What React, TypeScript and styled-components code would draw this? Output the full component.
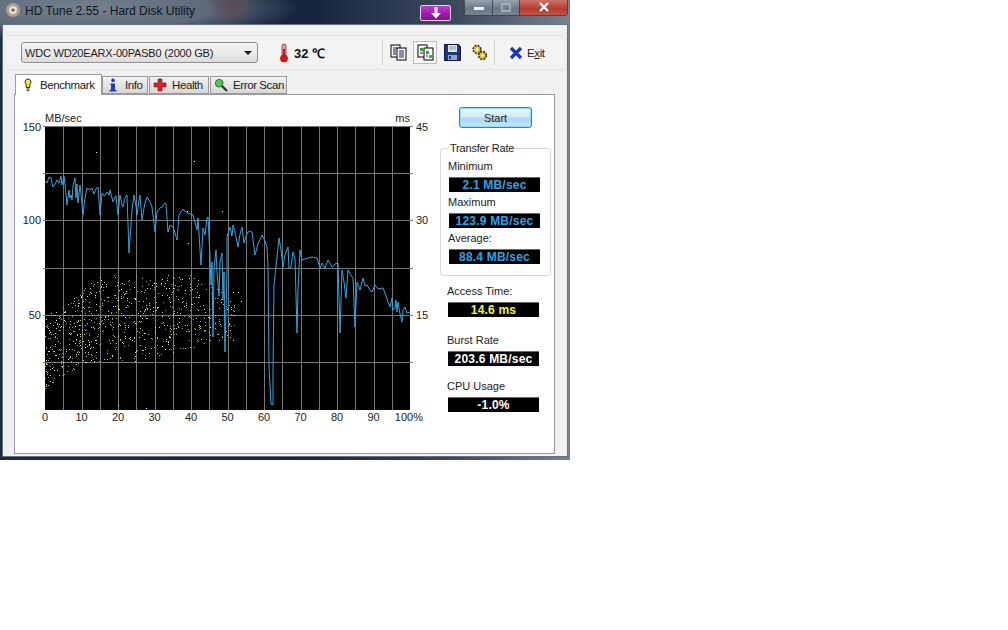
import React from 'react';
import styled, { createGlobalStyle } from 'styled-components';

const GlobalStyle = createGlobalStyle`
  html, body {
    margin: 0;
    background: #fff;
    font-family: "Liberation Sans", Arial, sans-serif;
    color: #222;
  }
`;

const Window = styled.div`
  width: 570px;
  height: 460px;
  box-sizing: border-box;
  display: flex;
  flex-direction: column;
  padding: 0 2px 3px 2px;
  background:
    radial-gradient(ellipse 26px 24px at 232px 4px, #5d4a55 0%, rgba(93, 74, 85, 0) 100%),
    radial-gradient(ellipse 215px 34px at 85px 8px, #77818e 0%, #5d6a7b 60%, rgba(60, 72, 92, 0) 100%),
    linear-gradient(90deg, #1c2b44 0%, #172540 55%, #3d4a5e 80%, #77828f 100%);
`;

const TitleBar = styled.div`
  height: 24px;
  flex: none;
  display: flex;
  align-items: flex-start;
`;

const AppIcon = styled.svg`
  width: 16px;
  height: 16px;
  margin: 2px 0 0 3px;
`;

const Title = styled.div`
  margin: 3px 0 0 4px;
  font-size: 12px;
  line-height: 16px;
  color: #0c1420;
`;

const TitleSpacer = styled.div`
  flex: 1;
`;

const DropButton = styled.div`
  width: 31px;
  height: 16px;
  margin: 5px 12px 0 0;
  box-sizing: border-box;
  border: 1px solid #e6d0ec;
  border-radius: 2px;
  background: linear-gradient(180deg, #c43ad0 0%, #a01cae 55%, #7c1490 100%);
  display: flex;
  justify-content: center;
`;

const CaptionButtons = styled.div`
  display: flex;
  height: 15px;
  border: 1px solid #3b4656;
  border-top: none;
  border-radius: 0 0 4px 4px;
  overflow: hidden;
`;

const CaptionButton = styled.div<{ $w: number; $close?: boolean }>`
  width: ${p => p.$w}px;
  display: flex;
  align-items: center;
  justify-content: center;
  border-left: 1px solid rgba(30, 40, 55, 0.6);
  background: ${p =>
    p.$close
      ? 'linear-gradient(180deg, #c9746a 0%, #b5392f 60%, #c2574a 100%)'
      : 'linear-gradient(180deg, #9aa4b0 0%, #6b7888 55%, #76838f 100%)'};
`;

const Client = styled.div`
  flex: 1;
  min-height: 0;
  display: flex;
  flex-direction: column;
  box-sizing: border-box;
  background: #f0f0f0;
  border: 1px solid #66707e;
  padding: 10px 12px 2px 4px;
`;

const Toolbar = styled.div`
  height: 35px;
  flex: none;
  box-sizing: border-box;
  display: flex;
  align-items: center;
  margin-right: -8px;
  padding-left: 14px;
  background: #f3f3f3;
  border-top: 1px solid #e3e3e3;
  border-bottom: 1px solid #e3e3e3;
`;

const Combo = styled.div`
  width: 237px;
  height: 21px;
  box-sizing: border-box;
  display: flex;
  align-items: center;
  justify-content: space-between;
  padding: 0 4px 0 3px;
  border: 1px solid #8e8e8e;
  border-radius: 3px;
  background: linear-gradient(180deg, #f2f2f2 0%, #ebebeb 50%, #dcdcdc 100%);
  font-size: 11px;
  letter-spacing: -0.2px;
  white-space: nowrap;
  color: #1c1c1c;
`;

const ComboArrow = styled.span`
  width: 0;
  height: 0;
  border-left: 4px solid transparent;
  border-right: 4px solid transparent;
  border-top: 4px solid #111;
  margin-right: 1px;
`;

const Temperature = styled.div`
  display: flex;
  align-items: center;
  margin-left: 20px;
  width: 104px;
  font-size: 13px;
  font-weight: bold;
  color: #111;
`;

const TempIcon = styled.svg`
  width: 12px;
  height: 20px;
  margin-right: 4px;
`;

const Separator = styled.div<{ $gap?: number }>`
  width: 1px;
  height: 25px;
  margin-left: ${p => p.$gap ?? 0}px;
  background: #cfcfcf;
`;

const ToolButton = styled.div<{ $pressed?: boolean }>`
  width: 24px;
  height: 23px;
  margin-left: 3px;
  box-sizing: border-box;
  display: flex;
  align-items: center;
  justify-content: center;
  border: 1px solid ${p => (p.$pressed ? '#bdbdbd' : 'transparent')};
  background: ${p => (p.$pressed ? '#f8f8f8' : 'transparent')};
  svg {
    width: 17px;
    height: 17px;
  }
`;

const ExitButton = styled.div`
  display: flex;
  align-items: center;
  margin-left: 14px;
  font-size: 11.5px;
  letter-spacing: -0.4px;
  color: #222;
  svg {
    width: 14px;
    height: 14px;
    margin-right: 4px;
  }
  u {
    text-underline-offset: 1px;
  }
`;

const TabRow = styled.div`
  height: 20px;
  margin-top: 4px;
  flex: none;
  display: flex;
  align-items: flex-end;
  padding-left: 8px;
  position: relative;
  z-index: 1;
`;

const TabItem = styled.div<{ $w: number; $active?: boolean }>`
  width: ${p => p.$w}px;
  height: ${p => (p.$active ? 21 : 18)}px;
  margin-right: ${p => (p.$active ? 0 : 1)}px;
  margin-bottom: ${p => (p.$active ? -1 : 0)}px;
  box-sizing: border-box;
  display: flex;
  align-items: center;
  padding-left: ${p => (p.$active ? 5 : 3)}px;
  gap: 5px;
  border: 1px solid #9a9a9a;
  border-bottom: ${p => (p.$active ? 'none' : '1px solid #9a9a9a')};
  background: ${p => (p.$active ? '#fff' : 'linear-gradient(180deg, #f2f2f2 0%, #e4e4e4 50%, #d6d6d6 100%)')};
  font-size: 11.5px;
  letter-spacing: -0.4px;
  white-space: nowrap;
  color: #222;
  svg {
    width: 14px;
    height: 14px;
    flex: none;
  }
`;

const Panel = styled.div`
  flex: 1;
  min-height: 0;
  margin-left: 7px;
  box-sizing: border-box;
  display: flex;
  background: #fff;
  border: 1px solid #9a9a9a;
`;

const ChartSvg = styled.svg`
  width: 415px;
  height: 330px;
  margin-top: 15px;
  flex: none;
  font-family: "Liberation Sans", Arial, sans-serif;
`;

const Side = styled.div`
  margin-left: 10px;
  width: 111px;
  display: flex;
  flex-direction: column;
  padding-top: 12px;
`;

const StartButton = styled.div`
  width: 73px;
  height: 21px;
  margin-left: 19px;
  box-sizing: border-box;
  display: flex;
  align-items: center;
  justify-content: center;
  border: 1px solid #3c7fb1;
  border-radius: 3px;
  box-shadow: inset 0 0 0 1px #8fdcf8;
  background: linear-gradient(180deg, #eaf6fc 0%, #d4ecf8 48%, #a9d9f1 52%, #c4e6f6 100%);
  font-size: 11px;
  color: #222;
`;

const Group = styled.fieldset`
  margin: 14px 0 0;
  padding: 4px 8px 0 8px;
  height: 134px;
  box-sizing: border-box;
  border: 1px solid #d9d9d9;
  border-radius: 3px;
  min-width: 0;
  legend {
    padding: 0 2px;
    margin-left: -1px;
    font-size: 11px;
    line-height: 13px;
    letter-spacing: -0.2px;
    color: #222;
  }
`;

const Metric = styled.div<{ $top?: number }>`
  margin-top: ${p => p.$top ?? 0}px;
  width: 100%;
`;

const MetricLabel = styled.div`
  margin-left: -1px;
  font-size: 11px;
  line-height: 14px;
  height: 15px;
  color: #222;
`;

const Readout = styled.div<{ $color: string }>`
  width: 91px;
  height: 15px;
  margin-top: 3px;
  margin-bottom: 3px;
  box-sizing: border-box;
  display: flex;
  align-items: center;
  justify-content: center;
  background: #000;
  border-top: 1px solid #6a6a6a;
  font-size: 12px;
  line-height: 13px;
  font-weight: bold;
  letter-spacing: 0.2px;
  white-space: nowrap;
  color: ${p => p.$color};
`;

const Stand = styled.div`
  padding-left: 8px;
`;

// chart svg sits at page x=15,y=110, traced points below are page coords
const OX = 15;
const OY = 110;
const L = 45;
const R = 410;
const T = 126;
const B = 410;

const trace = `45,181 47,183 49,177 51,178 53,187 55,184 57,180 59,183 61,176 62,185 64,176 65,184
67,205 69,190 70,198 71,195 72,200 73,186 75,178 76,198 77,184 78,203 80,185 81,194 83,215 85,198 87,188
90,190 92,188 94,194 96,189 98,187 100,215 102,193 104,196 107,192 109,195 110,190 113,202 115,197 116,196
118,215 120,195 122,205 123,207 125,198 127,195 129,253 131,225 132,210 134,195 136,206 137,215 139,200
140,195 142,220 144,208 145,203 147,197 150,202 152,207 155,232 157,212 160,208 162,207 165,203 166,204
168,232 170,225 173,227 175,233 177,240 179,215 181,212 183,209 186,212 188,213 193,215 197,230 198,218
201,265 203,228 205,235 207,218 208,217 210,257 211,285 212,262 213,337 214,268 216,250 217,272 219,296
220,262 222,253 223,300 224,272 225,352 227,272 227,237 229,230 230,227 232,236 233,225 235,232 238,247
240,234 242,227 244,243 246,236 248,232 250,231 252,232 255,255 258,244 262,235 265,241 267,247 268,265
269,367 271,404 273,405 273,375 274,285 276,266 277,257 279,238 281,250 283,267 285,255 288,247 289,268
291,267 293,252 295,258 297,333 298,290 300,250 302,260 305,259 308,258 312,257 317,258 320,268 322,263
325,268 328,260 332,267 335,264 338,263 340,333 342,270 344,282 346,298 348,270 350,274 353,278 355,327
357,282 360,290 363,278 365,286 367,285 370,290 372,292 375,285 378,289 383,288 386,296 388,302 390,307
392,298 393,310 395,308 396,300 397,312 398,302 400,314 402,322 403,310 405,307 407,313 410,312`
  .replace(/\s+/g, ' ')
  .trim();

const linePoints = trace
  .split(' ')
  .map(p => {
    const [x, y] = p.split(',').map(Number);
    return `${x - OX},${y - OY}`;
  })
  .join(' ');

// little LCG so the access time scatter comes out the same every render
const rng = (seed: number) => () => {
  seed = (seed * 1664525 + 1013904223) % 4294967296;
  return seed / 4294967296;
};

const topEdge = (x: number) => {
  if (x < 100) return 318 - (x - 45) * 0.78;
  if (x < 195) return 275;
  return 275 + (x - 195) * 0.6;
};
const bottomEdge = (x: number) => {
  if (x < 85) return 388 - (x - 45) * 0.65;
  if (x < 130) return 362;
  return 362 - (x - 130) * 0.22;
};

const scatter = (() => {
  const r = rng(42);
  const dots: { x: number; y: number; o: number }[] = [];
  while (dots.length < 760) {
    const x = 45 + Math.pow(r(), 1.2) * 190;
    const y = topEdge(x) + r() * (bottomEdge(x) - topEdge(x));
    if (x > 200 && r() < 0.6) continue;
    dots.push({ x: Math.round(x), y: Math.round(y), o: 0.6 + r() * 0.4 });
  }
  return dots;
})();

const strayDots = [
  [96, 152],
  [194, 161],
  [187, 211],
  [188, 243],
  [222, 211],
  [118, 405],
  [146, 408],
  [233, 292],
  [238, 292],
  [241, 301],
  [233, 340],
];

const xLabels = [0, 10, 20, 30, 40, 50, 60, 70, 80, 90];
const hLines = [173, 220, 268, 315, 362].map(y => y + 0.5);
const vLines = Array.from({ length: 19 }, (_, i) => Math.round(L + ((R - L) * (i + 1)) / 20) + 0.5);

const Chart = () => (
  <ChartSvg viewBox="0 0 415 330">
    <rect x={L - OX} y={T - OY} width={R - L} height={B - T} fill="#000" />
    {vLines.map(x => (
      <line key={x} x1={x - OX} x2={x - OX} y1={T - OY} y2={B - OY} stroke="#787878" />
    ))}
    {hLines.map(y => (
      <line key={y} x1={L - OX - 2} x2={R - OX + 3} y1={y - OY} y2={y - OY} stroke="#787878" />
    ))}
    <line x1={L - OX - 2} x2={R - OX + 3} y1={T - OY + 0.5} y2={T - OY + 0.5} stroke="#787878" />
    {scatter.map((d, i) => (
      <rect key={i} x={d.x - OX} y={d.y - OY} width={1} height={1} fill="#ecec9a" opacity={d.o} />
    ))}
    {strayDots.map(([x, y]) => (
      <rect key={`${x}-${y}`} x={x - OX} y={y - OY} width={1} height={1} fill="#f4f4d8" />
    ))}
    <polyline points={linePoints} fill="none" stroke="#35a5dd" strokeWidth={1} strokeLinejoin="round" />
    <g fontSize={11} fill="#222">
      <text x={L - OX} y={122 - OY}>MB/sec</text>
      <text x={R - OX} y={122 - OY} textAnchor="end">ms</text>
      <text x={26} y={21} textAnchor="end">150</text>
      <text x={26} y={114} textAnchor="end">100</text>
      <text x={26} y={209} textAnchor="end">50</text>
      <text x={401} y={21}>45</text>
      <text x={401} y={114}>30</text>
      <text x={401} y={209}>15</text>
      {xLabels.map((v, i) => (
        <text key={v} x={L - OX + ((R - L) * i) / 10} y={311} textAnchor="middle">
          {v}
        </text>
      ))}
      <text x={408} y={311} textAnchor="end">100%</text>
    </g>
  </ChartSvg>
);

const App = () => (
  <>
    <GlobalStyle />
    <Window>
      <TitleBar>
        <AppIcon viewBox="0 0 16 16">
          <circle cx="8" cy="8" r="7" fill="#a8a196" />
          <circle cx="8" cy="8" r="4" fill="#e2ddd2" />
          <circle cx="8" cy="8" r="1.6" fill="#6d5a48" />
        </AppIcon>
        <Title>HD Tune 2.55 - Hard Disk Utility</Title>
        <TitleSpacer />
        <DropButton>
          <svg width="14" height="14" viewBox="0 0 14 14">
            <path d="M5.5 1h3v6h3.5L7 12.5 2 7h3.5z" fill="#fff" />
          </svg>
        </DropButton>
        <CaptionButtons>
          <CaptionButton $w={27}>
            <svg width="12" height="6" viewBox="0 0 12 6">
              <rect x="1" y="2" width="10" height="3" fill="#eef2f6" />
            </svg>
          </CaptionButton>
          <CaptionButton $w={26}>
            <svg width="12" height="10" viewBox="0 0 12 10">
              <rect x="2" y="1" width="8" height="7" fill="none" stroke="#aeb6bf" strokeWidth="1.6" />
            </svg>
          </CaptionButton>
          <CaptionButton $w={47} $close>
            <svg width="12" height="11" viewBox="0 0 12 11">
              <path d="M2 1l8 8M10 1l-8 8" stroke="#fff" strokeWidth="2.4" />
            </svg>
          </CaptionButton>
        </CaptionButtons>
      </TitleBar>
      <Client>
        <Toolbar>
          <Combo>
            WDC WD20EARX-00PASB0 (2000 GB)
            <ComboArrow />
          </Combo>
          <Temperature>
            <TempIcon viewBox="0 0 12 20">
              <rect x="4" y="1" width="4" height="13" rx="2" fill="#e8a0a0" stroke="#8a2a2a" strokeWidth="0.8" />
              <rect x="5" y="6" width="2" height="9" fill="#d01818" />
              <circle cx="6" cy="15.5" r="3.6" fill="#d01818" stroke="#8a1a1a" strokeWidth="0.6" />
            </TempIcon>
            32 ℃
          </Temperature>
          <Separator />
          <ToolButton>
            <svg viewBox="0 0 17 17">
              <rect x="1" y="1" width="9" height="12" fill="#fff" stroke="#000" />
              <rect x="7" y="4" width="9" height="12" fill="#fff" stroke="#000" />
              <path d="M3 4h5M3 6h3M3 8h3M3 10h3M9 7h5M9 9h5M9 11h5M9 13h5" stroke="#111a50" />
            </svg>
          </ToolButton>
          <ToolButton $pressed>
            <svg viewBox="0 0 17 17">
              <rect x="1" y="1" width="9" height="12" fill="#fff" stroke="#000" />
              <rect x="7" y="4" width="9" height="12" fill="#fff" stroke="#000" />
              <rect x="3" y="4" width="3" height="3" fill="#38a038" />
              <rect x="9" y="7" width="3" height="3" fill="#38a038" />
              <rect x="12" y="11" width="3" height="3" fill="#48a838" />
              <path d="M3 9h3M9 12h2" stroke="#111a50" />
            </svg>
          </ToolButton>
          <ToolButton>
            <svg viewBox="0 0 17 17">
              <path d="M.5.5h14l2 2v14H.5z" fill="#1f3580" stroke="#0e1740" />
              <rect x="4" y="1" width="9" height="7" fill="#dfe6f4" />
              <path d="M5 3h7M5 5h7" stroke="#8a98c0" />
              <rect x="4" y="11" width="9" height="5" fill="#9aa4b8" />
              <rect x="5" y="12" width="2" height="3" fill="#1f3580" />
            </svg>
          </ToolButton>
          <ToolButton>
            <svg viewBox="0 0 17 17">
              <circle cx="6" cy="5.5" r="3.8" fill="#ecd24a" stroke="#4a4010" strokeWidth="1.8" strokeDasharray="2 1" />
              <circle cx="11.5" cy="11.5" r="3.8" fill="#e4c83c" stroke="#4a4010" strokeWidth="1.8" strokeDasharray="2 1" />
              <circle cx="6" cy="5.5" r="1.1" fill="#fff" />
              <circle cx="11.5" cy="11.5" r="1.1" fill="#fff" />
            </svg>
          </ToolButton>
          <Separator $gap={3} />
          <ExitButton>
            <svg viewBox="0 0 14 14">
              <path d="M2 2l10 10M12 2L2 12" stroke="#1a34b8" strokeWidth="3.2" />
            </svg>
            <span>
              E<u>x</u>it
            </span>
          </ExitButton>
        </Toolbar>
        <TabRow>
          <TabItem $w={87} $active>
            <svg viewBox="0 0 14 14">
              <path d="M7 1a2.9 2.9 0 0 0-1.8 5.2V9.5h3.6V6.2A2.9 2.9 0 0 0 7 1z" fill="#f2ea4a" stroke="#2a2a10" />
              <path d="M5.4 11h3.2M5.8 12.6h2.4" stroke="#222" />
            </svg>
            Benchmark
          </TabItem>
          <TabItem $w={46}>
            <svg viewBox="0 0 14 14">
              <circle cx="7" cy="2.4" r="1.8" fill="#1c3cc0" />
              <path d="M4.5 5.5H9V12h1.5v1.5h-7V12H5V7H4.5z" fill="#1c3cc0" />
            </svg>
            Info
          </TabItem>
          <TabItem $w={60}>
            <svg viewBox="0 0 14 14">
              <path d="M5 1h4v4h4v4H9v4H5V9H1V5h4z" fill="#d2232a" stroke="#7a1a1a" strokeWidth="0.6" />
            </svg>
            Health
          </TabItem>
          <TabItem $w={77}>
            <svg viewBox="0 0 14 14">
              <circle cx="5.2" cy="5.2" r="3.8" fill="#4ed04a" stroke="#2a6a30" />
              <path d="M8 8l5 5" stroke="#2a2a40" strokeWidth="2.2" />
            </svg>
            Error Scan
          </TabItem>
        </TabRow>
        <Panel>
          <Chart />
          <Side>
            <StartButton>Start</StartButton>
            <Group>
              <legend>Transfer Rate</legend>
              <MetricLabel>Minimum</MetricLabel>
              <Readout $color="#2aa4e4">2.1 MB/sec</Readout>
              <MetricLabel>Maximum</MetricLabel>
              <Readout $color="#2aa4e4">123.9 MB/sec</Readout>
              <MetricLabel>Average:</MetricLabel>
              <Readout $color="#2aa4e4">88.4 MB/sec</Readout>
            </Group>
            <Stand>
              <Metric $top={8}>
                <MetricLabel>Access Time:</MetricLabel>
                <Readout $color="#f4f44a">14.6 ms</Readout>
              </Metric>
              <Metric $top={16}>
                <MetricLabel>Burst Rate</MetricLabel>
                <Readout $color="#fff">203.6 MB/sec</Readout>
              </Metric>
              <Metric $top={13}>
                <MetricLabel>CPU Usage</MetricLabel>
                <Readout $color="#fff">-1.0%</Readout>
              </Metric>
            </Stand>
          </Side>
        </Panel>
      </Client>
    </Window>
  </>
);

export default App;
